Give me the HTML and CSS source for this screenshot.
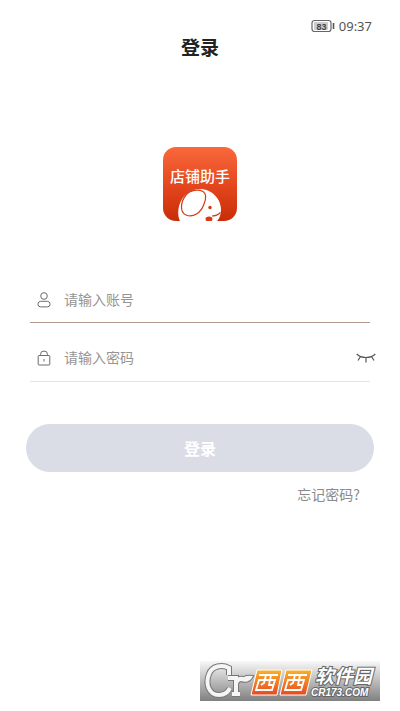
FILE: index.html
```html
<!DOCTYPE html>
<html lang="zh-CN">
<head>
<meta charset="utf-8">
<meta name="viewport" content="width=device-width, initial-scale=1">
<title>登录</title>
<link rel="stylesheet" href="styles.css">
</head>
<body>
<div class="status">
  <svg class="battery" viewBox="0 0 24 14" width="24" height="14" aria-hidden="true">
    <rect x="1" y="1.500" width="19" height="11" rx="2.500" fill="#fff" stroke="#666" stroke-width="1.200"/>
    <rect x="3" y="3" width="14" height="8" rx="1" fill="#ccc"/>
    <path d="M22.500 4v6" stroke="#555" stroke-width="1.600"/>
    <text x="10.500" y="10.500" text-anchor="middle" class="battery-level">83</text>
  </svg>
  <span class="clock">09:37</span>
</div>
<header class="header"><h1 class="title">登录</h1></header>
<main class="main">
  <svg class="logo" viewBox="0 0 74 74" width="74" height="74" role="img" aria-label="店铺助手">
    <defs>
      <linearGradient id="red" x1="0" y1="0" x2="0" y2="1">
        <stop offset="0" stop-color="#f9683c"/>
        <stop offset=".5" stop-color="#e5481f"/>
        <stop offset="1" stop-color="#c92d08"/>
      </linearGradient>
      <clipPath id="tile"><rect width="74" height="74" rx="13"/></clipPath>
    </defs>
    <g clip-path="url(#tile)">
      <rect width="74" height="74" fill="url(#red)"/>
      <path d="M17 74C14 68 15 60 18 54C22 46 29 42 37 42C49 42 58 52 58 63C58 68 56 72 54 74Z" fill="#fff"/>
      <path d="M23 48C18 54 16 65 23 68C30 71 38 66 41 57C43 52 44 47 40 44.500C35 42 27 43 23 48Z" fill="#fff" stroke="#d63b16" stroke-width="1.200"/>
      <circle cx="47" cy="60.500" r="1.700" fill="#d63b16"/>
      <path d="M49 69Q54 69 57.500 65.500" fill="none" stroke="#d63b16" stroke-width="1.200"/>
      <ellipse cx="46" cy="72" rx="3.500" ry="2.500" fill="#d63b16"/>
      <text x="37" y="35" text-anchor="middle" class="logo-name">店铺助手</text>
    </g>
  </svg>
  <form class="form">
    <div class="field field-active">
      <label class="field-label" for="account" aria-label="账号">
        <svg class="field-icon" viewBox="0 0 14 16" width="14" height="16" aria-hidden="true">
          <circle cx="7" cy="4" r="3.300"/>
          <rect x=".9" y="9.300" width="12.200" height="5.600" rx="2.800"/>
        </svg>
      </label>
      <input class="input" id="account" type="text" placeholder="请输入账号">
    </div>
    <div class="field">
      <label class="field-label" for="password" aria-label="密码">
        <svg class="field-icon" viewBox="0 0 14 16" width="14" height="16" aria-hidden="true">
          <rect x="1.200" y="5.500" width="11.600" height="9.500" rx=".8"/>
          <path d="M3.500 5.500V4.500a3.500 3.500 0 0 1 7 0V5.500M7 9v2.500"/>
        </svg>
      </label>
      <input class="input" id="password" type="password" placeholder="请输入密码">
      <button class="reveal" type="button" aria-label="显示密码">
        <svg viewBox="0 0 20 10" width="20" height="10" aria-hidden="true">
          <path d="M.7 1Q4 4.500 10 4.500T19.300 1M4.200 4L2 7.500M10 4.500v5M15.800 4L18 7.500"/>
        </svg>
      </button>
    </div>
    <button class="submit" type="submit">登录</button>
    <a class="forgot" href="#">忘记密码?</a>
  </form>
</main>
<footer class="footer">
  <svg class="brand" viewBox="0 0 180 40" width="180" height="40" role="img" aria-label="西西软件园 CR173.COM">
    <defs>
      <linearGradient id="grey" x1="0" y1="0" x2="0" y2="1">
        <stop offset="0" stop-color="#f8f8f8"/>
        <stop offset="1" stop-color="#808080"/>
      </linearGradient>
      <linearGradient id="orange" x1="0" y1="0" x2="0" y2="1">
        <stop offset="0" stop-color="#f9b22c"/>
        <stop offset="1" stop-color="#e9481f"/>
      </linearGradient>
      <g id="initials">
        <path d="M29 14V7C22 3 12 5 9 13C5 23 9 34 19 34C25 34 28 31 30 27"/>
        <path d="M28 17H36V33M32 33H40M36 23Q37 17 43 18"/>
      </g>
    </defs>
    <rect width="180" height="40" fill="url(#grey)"/>
    <g fill="none">
      <use href="#initials" stroke="#777" stroke-width="6"/>
      <path d="M41 20Q42 14 53 15Q49 23 41 20Z" fill="#f5f5f5" stroke="#777" stroke-width="2"/>
      <use href="#initials" stroke="#f5f5f5" stroke-width="4"/>
      <path d="M41 20Q42 14 53 15Q49 23 41 20Z" fill="#f5f5f5"/>
    </g>
    <path d="M57 9H82L77 34H51Z" fill="url(#orange)" stroke="#fff"/>
    <path d="M86 9H112L106 34H80Z" fill="url(#orange)" stroke="#fff"/>
    <g fill="none" stroke="#fff" stroke-width="1.800">
      <path id="west" d="M59 14H78M59 19H75L72 29H56ZM66 14L64 22L61 24M71 14L69 24H73"/>
      <use href="#west" x="29"/>
    </g>
    <text x="115" y="22" class="brand-name">软件园</text>
    <text x="111" y="35" class="brand-site">CR173.COM</text>
  </svg>
</footer>
</body>
</html>
```

FILE: styles.css
```css
* { box-sizing: border-box; }

body {
  margin: 0;
  min-height: 100vh;
  display: flex;
  flex-direction: column;
  background: #fff;
  color: #222;
  font-family: "Noto Sans", "Noto Sans CJK SC", sans-serif;
}

.status {
  display: flex;
  justify-content: flex-end;
  align-items: center;
  gap: 4px;
  padding: 16px 28px 0;
  line-height: 20px;
}

.battery-level {
  font: bold 9px "Liberation Sans", sans-serif;
  fill: #444;
}

.clock {
  font-family: "Noto Sans", sans-serif;
  font-size: 13px;
  color: #555;
}

.header { text-align: center; }

.title {
  margin: 0;
  font-size: 19px;
  line-height: 24px;
  font-weight: 700;
}

.main {
  display: flex;
  flex-direction: column;
  align-items: center;
  padding: 87px 26px 0;
}

.logo-name {
  font: 500 15px "Noto Sans CJK SC", sans-serif;
  fill: #fff;
}

.form {
  align-self: stretch;
  display: flex;
  flex-direction: column;
  padding-top: 56px;
}

.field {
  display: flex;
  align-items: center;
  gap: 13px;
  height: 59px;
  margin: 0 4px;
  padding: 12px 0 0 7px;
  border-bottom: 1px solid #e4e4e6;
}

.field-active {
  height: 46px;
  padding-top: 0;
  border-bottom-color: #b49a8c;
}

.field-label {
  display: flex;
  flex: none;
}

.field-icon {
  fill: none;
  stroke: #6c6c6c;
  stroke-width: 1;
}

.input {
  flex: 1;
  min-width: 0;
  height: 32px;
  padding: 0 0 2px;
  border: 0;
  outline: 0;
  background: none;
  color: #333;
  font: 14px/20px "Noto Sans CJK SC", sans-serif;
}

.input::placeholder { color: #959595; }

.reveal {
  display: flex;
  margin-right: -6px;
  padding: 0;
  border: 0;
  background: none;
}

.reveal svg {
  fill: none;
  stroke: #555;
  stroke-width: 1.2;
}

.submit {
  height: 48px;
  margin-top: 42px;
  border: 0;
  border-radius: 24px;
  background: #dadce6;
  color: #fff;
  font: 700 16px/24px "Noto Sans CJK SC", sans-serif;
}

.forgot {
  align-self: flex-end;
  margin: 12px 14px 0 0;
  color: #8a8a8a;
  font: 14px/20px "Noto Sans CJK SC", sans-serif;
  text-decoration: none;
}

.footer {
  display: flex;
  justify-content: flex-end;
  margin-top: auto;
  padding: 20px 20px 10px;
}

.brand-name,
.brand-site {
  fill: #fff;
  stroke: #666;
  stroke-width: 2px;
  paint-order: stroke;
}

.brand-name { font: italic 700 19px "Noto Sans CJK SC", sans-serif; }

.brand-site { font: italic 700 10px "Liberation Sans", sans-serif; }
```
